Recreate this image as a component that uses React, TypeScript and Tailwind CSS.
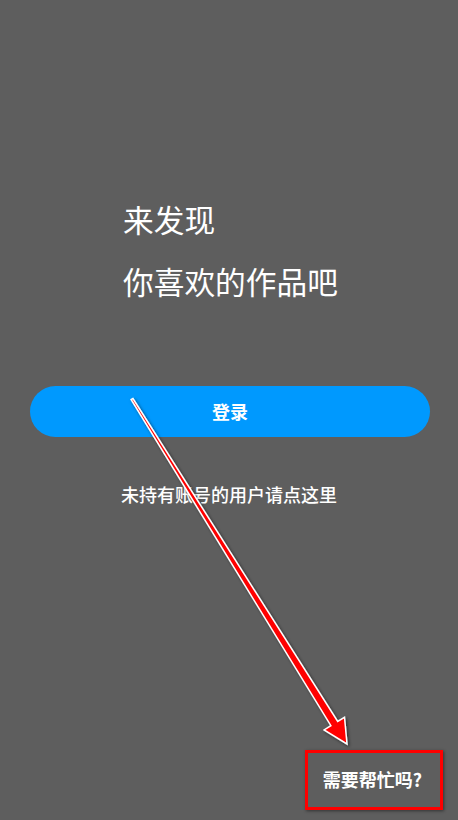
import React from "react";

// ─── Welcome screen ────────────────────────────────────────
// Gray landing page with login button and help link,
// plus the red annotation arrow / box overlay.

function AnnotationArrow() {
  return (
    <svg
      className="pointer-events-none absolute left-0 top-0"
      width={458}
      height={820}
      viewBox="0 0 458 820"
    >
      <defs>
        <filter id="shadow" x="-20%" y="-20%" width="140%" height="140%">
          <feDropShadow dx="1.5" dy="1.5" stdDeviation="1.5" floodColor="#000" floodOpacity="0.5" />
        </filter>
      </defs>
      <polygon
        points="132.9,398.5 337.7,721.5 344.5,717.3 347,744 324.1,729.9 330.9,725.7 131.1,399.5"
        fill="#ff0000"
        stroke="#ffffff"
        strokeWidth={1.5}
        strokeLinejoin="miter"
        filter="url(#shadow)"
      />
    </svg>
  );
}

export default function App() {
  return (
    <div
      className="relative flex h-[820px] w-full flex-col overflow-hidden bg-[#5e5e5e] text-white"
      style={{ fontFamily: '"Noto Sans CJK SC", "Noto Sans", sans-serif' }}
    >
      {/* Headline */}
      <div className="mt-[199px] pl-[123px] text-[30.7px] leading-[40px]">
        <p>来发现</p>
        <p className="mt-[22px]">你喜欢的作品吧</p>
      </div>

      {/* Login */}
      <button className="ml-[30px] mr-[28px] mt-[85px] flex h-[51px] items-center justify-center rounded-full bg-[#0099fe] text-[18px] font-bold text-white">
        登录
      </button>

      <p className="mt-[43px] text-center text-[18px] font-medium leading-[28px]">
        未持有账号的用户请点这里
      </p>

      {/* Help */}
      <div className="mt-auto mb-[27px] flex justify-end pr-[36px]">
        <span className="text-[18px] font-bold leading-[28px]">需要帮忙吗?</span>
      </div>

      {/* Annotation overlay */}
      <div className="absolute left-[305px] top-[750px] h-[60px] w-[138px] border-[3px] border-[#ff0000] shadow-[1px_1px_3px_rgba(0,0,0,0.45)]" />
      <AnnotationArrow />
    </div>
  );
}
